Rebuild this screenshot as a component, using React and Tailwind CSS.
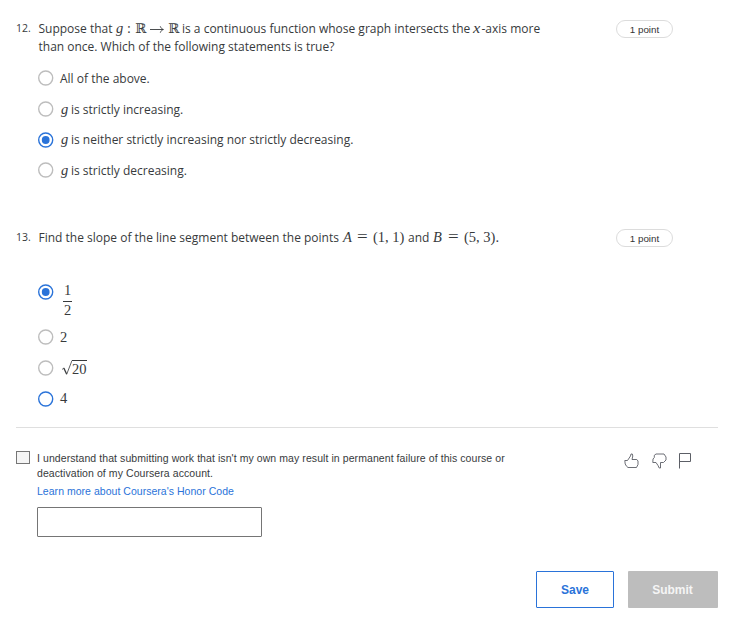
import React from 'react';

const sans = "font-['Open_Sans','Noto_Sans',sans-serif]";
const serif = "font-['Liberation_Serif',serif]";
const helv = "font-['Liberation_Sans',Arial,sans-serif]";

function Seg({ w, className = '', children }) {
  return <span className={`inline-block shrink-0 whitespace-nowrap ${w} ${className}`}>{children}</span>;
}

function Radio({ checked, focused }) {
  const on = checked || focused;
  return (
    <svg className="h-4 w-4 shrink-0" viewBox="0 0 16 16" fill="none">
      <circle cx="7.7" cy="8" r="7" stroke={on ? '#2a73d9' : '#bdbdbd'} strokeWidth="1.4" />
      {checked && <circle cx="7.7" cy="8" r="3.9" fill="#2a73d9" />}
    </svg>
  );
}

function Option({ checked, focused, children }) {
  return (
    <div className="flex h-[30.7px] items-center gap-[6px]">
      <Radio checked={checked} focused={focused} />
      <div className="flex h-[17px] items-baseline text-[12px] leading-[18px]">{children}</div>
    </div>
  );
}

function Points() {
  return (
    <div className={`flex h-[18px] w-[57px] items-center justify-center rounded-full border border-[#dcdcdc] pt-[2px] text-[9.8px] leading-[14px] text-[#333] ${helv}`}>
      1 point
    </div>
  );
}

const G = () => <Seg w="w-[11px]" className={`pl-px italic text-[14.5px] leading-none ${serif}`}>g</Seg>;

const Real = ({ w }) => <Seg w={w} className="text-[13.5px] leading-none font-['DejaVu_Serif','DejaVu_Sans',serif]">ℝ</Seg>;

const Equals = () => <Seg w="w-[16px]" className="origin-left scale-x-[1.18] text-[16px] leading-none font-['Liberation_Serif',serif]">=</Seg>;

export default function App() {
  return (
    <main className={`h-[630px] w-[755px] overflow-hidden bg-white text-[#373a3c] ${sans}`}>
      <section className="flex h-[209px] pl-4 pt-5">
        <div className="w-[22px] text-[10.5px] leading-[16px]">12.</div>
        <div className="w-[578px]">
          <div className="pl-[0.5px] text-[12px] leading-[18px]">
            <div className="flex h-[18px] items-baseline">
              <Seg w="w-[77.5px]">Suppose that</Seg>
              <Seg w="w-[11px]" className={`italic text-[14.5px] leading-none ${serif}`}>g</Seg>
              <Seg w="w-[8px]" className={`text-[14px] leading-none ${serif}`}>:</Seg>
              <Real w="w-[15px]" />
              <svg className="mr-[4px] h-[8px] w-[14px] shrink-0" viewBox="0 0 14 8" fill="none" stroke="#373a3c" strokeWidth=".9">
                <path d="M0 4.5H13.2M10.3 1.3C10.8 3 12 4 13.4 4.5C12 5 10.8 6 10.3 7.7" />
              </svg>
              <Real w="w-[14px]" />
              <Seg w="w-[291px]">is a continuous function whose graph intersects the</Seg>
              <Seg w="w-[8.5px]" className={`origin-bottom-left scale-x-110 italic text-[15px] leading-none ${serif}`}>x</Seg>
              <Seg w="w-[60px]">-axis more</Seg>
            </div>
            <div>than once. Which of the following statements is true?</div>
          </div>
          <div className="mt-[7px]">
            <Option>All of the above.</Option>
            <Option><G />is strictly increasing.</Option>
            <Option checked><G />is neither strictly increasing nor strictly decreasing.</Option>
            <Option><G />is strictly decreasing.</Option>
          </div>
        </div>
        <Points />
      </section>

      <section className="flex h-[218px] pl-4 pt-5">
        <div className="w-[22px] text-[10.5px] leading-[16px]">13.</div>
        <div className="w-[578px]">
          <div className="flex h-[18px] items-baseline pl-[0.5px] text-[12px] leading-[16px]">
            <Seg w="w-[304.5px]">Find the slope of the line segment between the points</Seg>
            <Seg w="w-[14px]" className={`italic text-[14.5px] leading-none ${serif}`}>A</Seg>
            <Equals />
            <Seg w="w-[35px]" className={`text-[14.5px] leading-none ${serif}`}>(1, 1)</Seg>
            <Seg w="w-[25px]">and</Seg>
            <Seg w="w-[15px]" className={`italic text-[14.5px] leading-none ${serif}`}>B</Seg>
            <Equals />
            <Seg w="w-[40px]" className={`text-[14.5px] leading-none ${serif}`}>(5, 3).</Seg>
          </div>
          <div className="mt-[36px] flex h-[39px] items-start gap-[9px]">
            <div className="mt-[1px]"><Radio checked /></div>
            <div className={`flex w-[9px] flex-col items-center text-[14.5px] ${serif}`}>
              <span className="h-[18px] leading-[14px]">1</span>
              <span className="h-px w-[9px] bg-[#373a3c]" />
              <span className="leading-[16px]">2</span>
            </div>
          </div>
          <Option><span className={`text-[14.5px] leading-[16px] ${serif}`}>2</span></Option>
          <Option>
            <div className={`flex text-[14.5px] leading-[18px] ${serif}`}>
              <svg className="h-[18px] w-[12px]" viewBox="0 0 12 18" fill="none" stroke="#373a3c">
                <path d="M2 9.5l2-1.6" strokeWidth=".7" />
                <path d="M3.8 8L6.6 14" strokeWidth="1.3" />
                <path d="M6.6 14.5L12 .5" strokeWidth=".8" />
              </svg>
              <span className="h-[17px] border-t border-[#373a3c] leading-[16px]">20</span>
            </div>
          </Option>
          <Option focused><span className={`text-[14.5px] leading-[16px] ${serif}`}>4</span></Option>
        </div>
        <Points />
      </section>

      <div className="ml-4 w-[702px] border-t border-[#dfdfdf]" />

      <section className={`flex h-[143px] pl-4 pt-[23px] ${helv}`}>
        <div className="h-[13px] w-[14px] shrink-0 border border-[#767676] bg-[#f5f5f5]" />
        <div className="ml-[7px] w-[587px] shrink-0 text-[10.5px] leading-[15px] tracking-[0.075px]">
          <div className="whitespace-nowrap">I understand that submitting work that isn't my own may result in permanent failure of this course or</div>
          <div>deactivation of my Coursera account.</div>
          <a className="mt-[3px] block tracking-[0.03px] text-[#2a73d9]">Learn more about Coursera's Honor Code</a>
          <div className="mt-[8px] h-[30px] w-[225px] rounded-[1px] border border-[#757575]" />
        </div>
        <div className="mt-[2px] flex h-4 items-center gap-[13px]">
          <svg className="h-[16px] w-[15px]" viewBox="0 0 15 16" fill="none" stroke="#5c5f66" strokeWidth=".9">
            <path d="M.8 7.5H3.5L6.5 3 7 1H8.3L8.8 3 8 6.5H12.8L14 8V11.5L12.5 14.5H4L2.5 13.2 1.2 11Z" />
          </svg>
          <svg className="h-[16px] w-[15px]" viewBox="0 0 15 16" fill="none" stroke="#5c5f66" strokeWidth=".9">
            <path d="M.8 9.5H4L6 12.5 7.2 15H8.5V9.5H11.5L14 7V4L12 1H4L2.3 2.3V4.5L1 6Z" />
          </svg>
          <svg className="-ml-px h-[16px] w-[12px]" viewBox="0 0 12 16" fill="none" stroke="#5c5f66">
            <path d="M.5 15.5V.5H11.5V8.5H.5" />
          </svg>
        </div>
      </section>

      <section className={`flex gap-[14px] pl-[536px] text-[12px] font-bold ${helv}`}>
        <button className="h-[37px] w-[78px] rounded-[1px] border border-[#2a73d9] text-[#2a73d9]">Save</button>
        <button className="h-[37px] w-[90px] rounded-[1px] bg-[#bdbdbd] pr-px text-[#f5f5f5]">Submit</button>
      </section>
    </main>
  );
}
